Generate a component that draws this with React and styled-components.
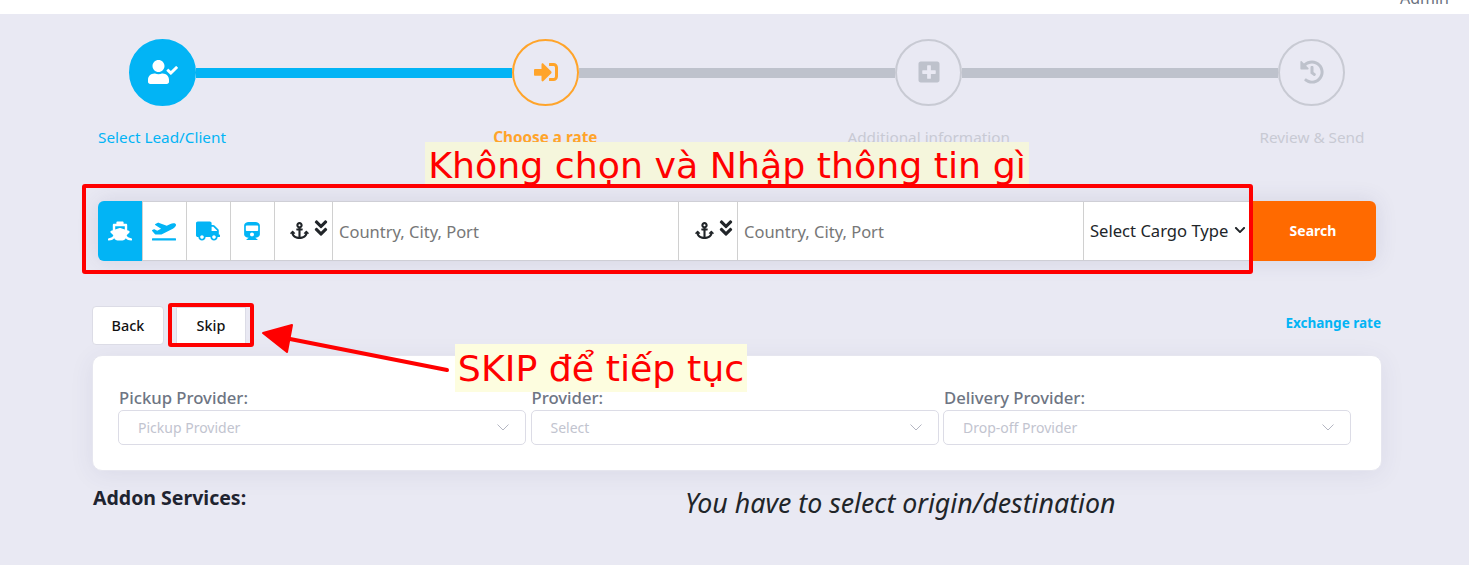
import React from "react"
import styled, { createGlobalStyle } from "styled-components"
import {
  FaUserCheck,
  FaSignInAlt,
  FaPlusSquare,
  FaHistory,
  FaShip,
  FaPlaneDeparture,
  FaTruck,
  FaTrain,
  FaAnchor,
  FaAngleDoubleDown,
  FaChevronDown,
} from "react-icons/fa"

const BLUE = "#02b4f5"
const ORANGE = "#ffa42a"
const GREY = "#bec2cc"

const GlobalStyle = createGlobalStyle`
  html, body {
    margin: 0;
    padding: 0;
    background: #e9e9f3;
    font-family: "Noto Sans", "Open Sans", sans-serif;
    overflow: hidden;
  }
  * { box-sizing: border-box; }
`

const Page = styled.div`
  position: relative;
  width: 1469px;
  height: 565px;
  overflow: hidden;
  background: #e9e9f3;
`

const TopBar = styled.div`
  height: 14px;
  background: #fff;
  display: flex;
  justify-content: flex-end;
  align-items: flex-end;
  padding: 0 20px 8px 0;
  overflow: hidden;
`

const UserName = styled.span`
  font-size: 16px;
  line-height: 16px;
  color: #6b7280;
`

const Content = styled.main`
  width: 1290px;
  margin-left: 92px;
`

const Stepper = styled.section`
  margin: 25px 6px 0;
  height: 162px;
`

const Track = styled.div`
  display: flex;
  align-items: center;
  padding: 0 31px;
`

const Circle = styled.div`
  flex: none;
  width: 67px;
  height: 67px;
  border-radius: 50%;
  display: flex;
  align-items: center;
  justify-content: center;
  font-size: ${(p) => p.$size || 24}px;
  color: ${(p) => p.$color};
  background: ${(p) => (p.$filled ? BLUE : "transparent")};
  border: 2px solid ${(p) => p.$border};
  & svg { display: block; margin-top: -2px; }
`

const Line = styled.div`
  flex: 1;
  height: 10px;
  background: ${(p) => p.$color};
`

const StepLabels = styled.div`
  display: flex;
  justify-content: space-between;
  margin-top: 21px;
`

const StepLabel = styled.div`
  width: 128px;
  white-space: nowrap;
  display: flex;
  justify-content: center;
  font-size: 15.3px;
  line-height: 20px;
  font-weight: ${(p) => (p.$bold ? 700 : 400)};
  color: ${(p) => p.$color};
`

const SearchBar = styled.section`
  display: flex;
  height: 60px;
  margin: 0 6px;
  border-radius: 6px;
  box-shadow: 0 0 22px rgba(60, 60, 110, 0.12);
`

const Fields = styled.div`
  flex: 1;
  display: flex;
  background: #fff;
  border-radius: 6px 0 0 6px;
  border-top: 1px solid #cfcfd6;
  border-bottom: 1px solid #cfcfd6;
`

const ModeTab = styled.div`
  flex: none;
  width: ${(p) => (p.$active ? 45 : 44)}px;
  margin: -1px 0;
  padding: 0 1px 1px 0;
  display: flex;
  align-items: center;
  justify-content: center;
  font-size: ${(p) => p.$size || 24}px;
  color: ${(p) => (p.$active ? "#fff" : BLUE)};
  background: ${(p) => (p.$active ? BLUE : "transparent")};
  border-radius: ${(p) => (p.$active ? "6px 0 0 6px" : "0")};
  border-right: 1px solid #d0d0d0;
`

const PortPicker = styled.div`
  flex: none;
  width: ${(p) => p.$width}px;
  display: flex;
  align-items: center;
  justify-content: flex-end;
  gap: 2px;
  padding: 0 1px 2px 0;
  font-size: 19px;
  color: #212529;
  border-right: 1px solid #d0d0d0;
  & svg:last-child { font-size: 20px; margin-bottom: 4px; }
`

const PortInput = styled.div`
  flex: none;
  width: ${(p) => p.$width}px;
  padding-left: 6px;
  display: flex;
  align-items: center;
  font-size: 16.5px;
  color: #777;
  border-right: 1px solid #d0d0d0;
`

const CargoSelect = styled.div`
  flex: 1;
  display: flex;
  align-items: center;
  justify-content: space-between;
  padding: 0 4px 2px 6px;
  font-size: 16.6px;
  color: #212529;
  white-space: nowrap;
  & svg { font-size: 12px; }
`

const SearchButton = styled.button`
  flex: none;
  width: 126px;
  border: 0;
  border-radius: 0 6px 6px 0;
  background: #ff6a00;
  color: #fff;
  padding-bottom: 3px;
  font: 700 14px "Noto Sans", sans-serif;
`

const ActionRow = styled.div`
  display: flex;
  justify-content: space-between;
  align-items: flex-end;
  margin-top: 45px;
`

const ActionButtons = styled.div`
  display: flex;
  align-items: center;
`

const ActionButton = styled.button`
  height: ${(p) => (p.$skip ? 37 : 39)}px;
  width: ${(p) => (p.$skip ? 70 : 72)}px;
  margin-left: ${(p) => (p.$skip ? 12 : 0)}px;
  background: #fff;
  border: 1px solid #dcdce6;
  border-radius: ${(p) => (p.$skip ? 0 : 4)}px;
  color: #111;
  font: 500 14.4px "Noto Sans", sans-serif;
`

const ExchangeLink = styled.a`
  font-size: 13.5px;
  line-height: 20px;
  font-weight: 700;
  color: ${BLUE};
  margin-bottom: 12px;
  margin-right: 1px;
`

const Card = styled.section`
  margin-top: 10px;
  height: 116px;
  background: #fff;
  border-radius: 10px;
  border: 1px solid #e6e6ef;
  box-shadow: 0 4px 24px rgba(60, 60, 110, 0.08);
  padding: 30px 30px 0 25px;
  display: grid;
  grid-template-columns: 408px 408px 408px;
  column-gap: 4.5px;
  align-content: start;
`

const Field = styled.div`
  display: flex;
  flex-direction: column;
`

const FieldLabel = styled.label`
  font-size: 16.7px;
  line-height: 24px;
  font-weight: 500;
  color: #6e7583;
  padding-left: 1px;
`

const Dropdown = styled.div`
  height: 35px;
  border: 1px solid #dcdce6;
  border-radius: 5px;
  padding: 0 16px 0 19px;
  display: flex;
  align-items: center;
  justify-content: space-between;
  font-size: 14px;
  color: #c2c4cf;
`

const Footer = styled.div`
  display: flex;
  margin-top: 14px;
`

const AddonTitle = styled.h3`
  margin: 0;
  width: 593px;
  padding-left: 1px;
  font-size: 19.5px;
  line-height: 26px;
  font-weight: 700;
  color: #1f2430;
`

const EmptyNotice = styled.em`
  font-size: 26.75px;
  line-height: 36px;
  color: #212529;
  white-space: nowrap;
`

const Note = styled.div`
  position: absolute;
  font-family: "DejaVu Sans", sans-serif;
  font-size: 36.3px;
  color: #ff0000;
  white-space: nowrap;
  display: flex;
  align-items: center;
  justify-content: center;
`

const TopNote = styled(Note)`
  left: 425px;
  top: 142px;
  width: 604px;
  height: 46px;
  background: #f5f6dc;
`

const SkipNote = styled(Note)`
  left: 455px;
  top: 344px;
  width: 292px;
  height: 48px;
  background: #fdfddf;
`

const RedFrame = styled.div`
  position: absolute;
  border: 4px solid #ff0000;
  border-radius: 3px;
`

const BarFrame = styled(RedFrame)`
  left: 82px;
  top: 184px;
  width: 1171px;
  height: 90px;
`

const SkipFrame = styled(RedFrame)`
  left: 168px;
  top: 303px;
  width: 86px;
  height: 44px;
`

const ArrowSvg = styled.svg`
  position: absolute;
  left: 255px;
  top: 315px;
`

const Chevron = () => (
  <svg width="12" height="7" viewBox="0 0 12 7" fill="none" stroke="#b4b6c2" strokeWidth="1">
    <path d="M0.5 0.5 L6 6 L11.5 0.5" />
  </svg>
)

export default function App() {
  return (
    <Page>
      <GlobalStyle />
      <TopBar>
        <UserName>Admin</UserName>
      </TopBar>
      <Content>
        <Stepper>
          <Track>
            <Circle $filled $size={30} $color="#fff" $border={BLUE}>
              <FaUserCheck />
            </Circle>
            <Line $color={BLUE} />
            <Circle $color={ORANGE} $border={ORANGE}>
              <FaSignInAlt />
            </Circle>
            <Line $color={GREY} />
            <Circle $color={GREY} $border="#c8cad3">
              <FaPlusSquare />
            </Circle>
            <Line $color={GREY} />
            <Circle $color={GREY} $border="#c8cad3">
              <FaHistory />
            </Circle>
          </Track>
          <StepLabels>
            <StepLabel $color={BLUE}>Select Lead/Client</StepLabel>
            <StepLabel $color={ORANGE} $bold>Choose a rate</StepLabel>
            <StepLabel $color="#c8cad3">Additional information</StepLabel>
            <StepLabel $color="#c8cad3">Review &amp; Send</StepLabel>
          </StepLabels>
        </Stepper>

        <SearchBar>
          <Fields>
            <ModeTab $active><FaShip /></ModeTab>
            <ModeTab><FaPlaneDeparture /></ModeTab>
            <ModeTab><FaTruck /></ModeTab>
            <ModeTab $size={18}><FaTrain /></ModeTab>
            <PortPicker $width={58}>
              <FaAnchor />
              <FaAngleDoubleDown />
            </PortPicker>
            <PortInput $width={346}>Country, City, Port</PortInput>
            <PortPicker $width={59}>
              <FaAnchor />
              <FaAngleDoubleDown />
            </PortPicker>
            <PortInput $width={346}>Country, City, Port</PortInput>
            <CargoSelect>
              Select Cargo Type
              <FaChevronDown />
            </CargoSelect>
          </Fields>
          <SearchButton>Search</SearchButton>
        </SearchBar>

        <ActionRow>
          <ActionButtons>
            <ActionButton>Back</ActionButton>
            <ActionButton $skip>Skip</ActionButton>
          </ActionButtons>
          <ExchangeLink>Exchange rate</ExchangeLink>
        </ActionRow>

        <Card>
          <Field>
            <FieldLabel>Pickup Provider:</FieldLabel>
            <Dropdown>Pickup Provider<Chevron /></Dropdown>
          </Field>
          <Field>
            <FieldLabel>Provider:</FieldLabel>
            <Dropdown>Select<Chevron /></Dropdown>
          </Field>
          <Field>
            <FieldLabel>Delivery Provider:</FieldLabel>
            <Dropdown>Drop-off Provider<Chevron /></Dropdown>
          </Field>
        </Card>

        <Footer>
          <AddonTitle>Addon Services:</AddonTitle>
          <EmptyNotice>You have to select origin/destination</EmptyNotice>
        </Footer>
      </Content>

      <TopNote>Không chọn và Nhập thông tin gì</TopNote>
      <BarFrame />
      <SkipFrame />
      <ArrowSvg width="200" height="60" viewBox="0 0 200 60">
        <path d="M192 55 L25 22" stroke="#ff0000" strokeWidth="4" strokeLinecap="round" />
        <path d="M8 18 L37 10 L32 37 Z" fill="#ff0000" stroke="#ff0000" strokeWidth="2" strokeLinejoin="round" />
      </ArrowSvg>
      <SkipNote>SKIP để tiếp tục</SkipNote>
    </Page>
  )
}
